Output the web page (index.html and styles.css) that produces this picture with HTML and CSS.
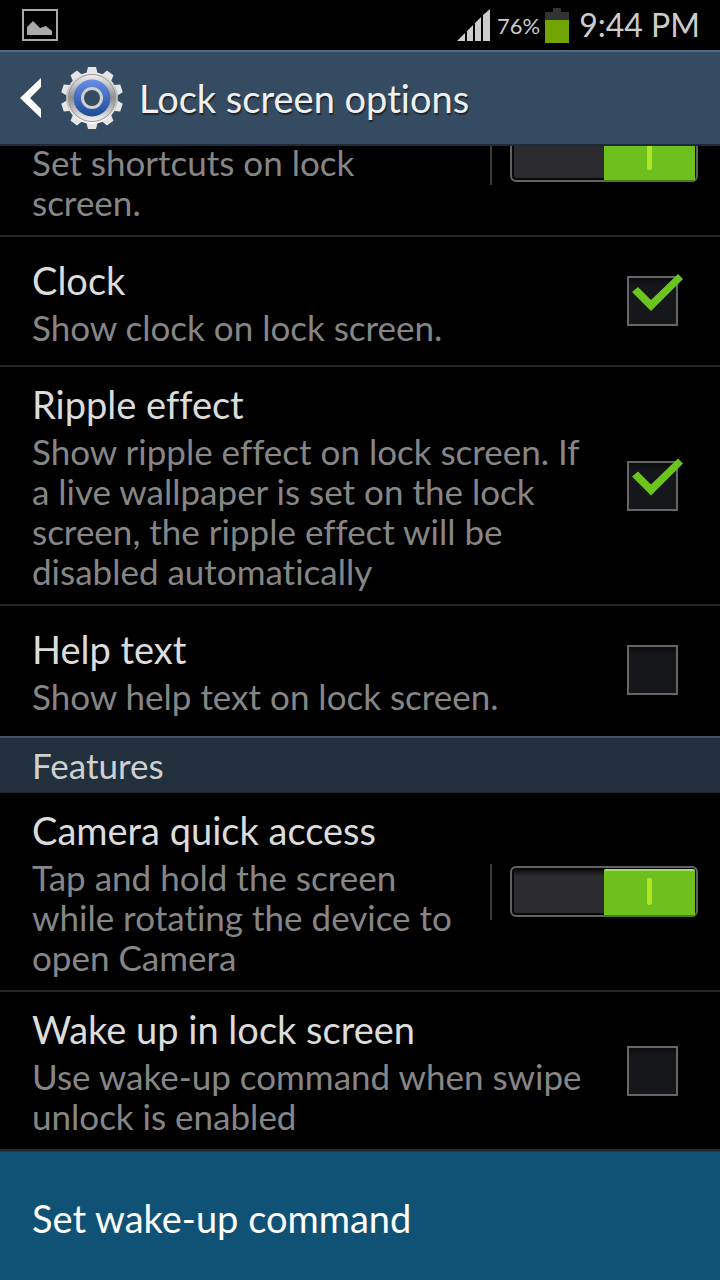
FILE: index.html
```html
<!DOCTYPE html>
<html lang="en">
<head>
    <meta charset="UTF-8">
    <meta name="viewport" content="width=device-width, initial-scale=1.0">
    <title>Lock screen options</title>
    <link rel="stylesheet" href="styles.css">
</head>
<body>
    <div class="status">
        <svg class="picture" width="36" height="32" viewBox="0 0 36 32">
            <rect x="1" y="1" width="34" height="30" fill="none" stroke="#aaa" stroke-width="2"/>
            <path d="M5 26V18L11 12L18 19L24 17L30 22V26Z" fill="#aaa"/>
        </svg>
        <svg class="signal" width="34" height="32" viewBox="0 0 34 32">
            <path d="M0 32L8 24V32ZM10 22L16 16V32H10ZM18 14L24 8V32H18ZM26 6L33 0V32H26Z" fill="#ccc"/>
        </svg>
        <span class="percent">76%</span>
        <svg class="battery" width="24" height="35" viewBox="0 0 24 35">
            <path d="M8 0H16V4H24V12H0V4H8Z" fill="#333"/>
            <path d="M0 12H24V35H0Z" fill="#73a500"/>
        </svg>
        <span class="time">9:44 PM</span>
    </div>
    <header class="header">
        <button class="back" aria-label="Back">
            <svg width="22" height="40" viewBox="0 0 22 40">
                <path d="M21 0V9L10 20L21 31V40L0 20Z" fill="#fff"/>
            </svg>
        </button>
        <svg class="gear" width="62" height="64" viewBox="-31 -32 62 64">
            <defs>
                <linearGradient id="metal" x1="0" y1="0" x2="0" y2="1">
                    <stop offset="0" stop-color="#e8e8e8"/>
                    <stop offset=".5" stop-color="#b4b4b4"/>
                    <stop offset="1" stop-color="#fafafa"/>
                </linearGradient>
                <linearGradient id="ring" x1="0" y1="0" x2="0" y2="1">
                    <stop offset="0" stop-color="#f2f2f2"/>
                    <stop offset=".5" stop-color="#8e8e8e"/>
                    <stop offset="1" stop-color="#f4f4f4"/>
                </linearGradient>
                <linearGradient id="blue" x1="0" y1="0" x2="0" y2="1">
                    <stop offset="0" stop-color="#6b8de8"/>
                    <stop offset="1" stop-color="#194a94"/>
                </linearGradient>
                <path id="tooth" d="M-6 -23L-4 -31H4L6 -23Z"/>
            </defs>
            <g fill="#e6e6e6">
                <use href="#tooth"/>
                <use href="#tooth" transform="rotate(36)"/>
                <use href="#tooth" transform="rotate(72)"/>
                <use href="#tooth" transform="rotate(108)"/>
                <use href="#tooth" transform="rotate(144)"/>
                <use href="#tooth" transform="rotate(180)"/>
                <use href="#tooth" transform="rotate(216)"/>
                <use href="#tooth" transform="rotate(252)"/>
                <use href="#tooth" transform="rotate(288)"/>
                <use href="#tooth" transform="rotate(324)"/>
            </g>
            <circle r="26" fill="url(#metal)"/>
            <circle r="23.500" fill="url(#ring)" stroke="#999" stroke-width="1"/>
            <circle r="18.500" fill="url(#blue)"/>
            <circle r="9.500" fill="#344b61" stroke="#d0d0d0" stroke-width="3"/>
        </svg>
        <h1>Lock screen options</h1>
    </header>
    <main class="list">
        <label class="row scrolled">
            <span class="text">
                <span class="desc">Set shortcuts on lock screen.</span>
            </span>
            <span class="divider"></span>
            <input class="switch" type="checkbox" role="switch" checked>
        </label>
        <label class="row">
            <span class="text">
                <span class="title">Clock</span>
                <span class="desc">Show clock on lock screen.</span>
            </span>
            <input class="check" type="checkbox" checked>
        </label>
        <label class="row">
            <span class="text">
                <span class="title">Ripple effect</span>
                <span class="desc">Show ripple effect on lock screen. If a live wallpaper is set on the lock screen, the ripple effect will be disabled automatically</span>
            </span>
            <input class="check" type="checkbox" checked>
        </label>
        <label class="row last">
            <span class="text">
                <span class="title">Help text</span>
                <span class="desc">Show help text on lock screen.</span>
            </span>
            <input class="check" type="checkbox">
        </label>
        <h2>Features</h2>
        <label class="row">
            <span class="text">
                <span class="title">Camera quick access</span>
                <span class="desc">Tap and hold the screen while rotating the device to open Camera</span>
            </span>
            <span class="divider"></span>
            <input class="switch" type="checkbox" role="switch" checked>
        </label>
        <label class="row">
            <span class="text">
                <span class="title">Wake up in lock screen</span>
                <span class="desc">Use wake-up command when swipe unlock is enabled</span>
            </span>
            <input class="check" type="checkbox">
        </label>
        <button class="command">Set wake-up command</button>
    </main>
</body>
</html>
```
FILE: styles.css
```css
*{
    box-sizing: border-box;
}
body{
    margin: 0;
    min-height: 100vh;
    background-color: #000;
    color: #dcdcdc;
    font-family: Lato, "Open Sans", sans-serif;
    font-size: 38px;
    font-variant-ligatures: none;
}
h1, h2{
    margin: 0;
    font-weight: 400;
}
button{
    border: 0;
    font-family: inherit;
    font-variant-ligatures: none;
    cursor: pointer;
}
.status{
    display: flex;
    align-items: center;
    height: 50px;
    padding: 0 20px 0 22px;
    color: #ccc;
}
.signal{
    margin-left: auto;
}
.percent{
    margin: 0 5px 0 6px;
    font-size: 22px;
}
.time{
    margin-left: 10px;
    font-size: 32px;
    line-height: 50px;
}
.header{
    display: flex;
    align-items: center;
    height: 96px;
    padding-left: 20px;
    background-color: #344b61;
    border-top: 2px solid #4c6b83;
    border-bottom: 2px solid #1b2b39;
}
.back{
    display: flex;
    padding: 0;
    background: none;
}
.gear{
    margin: 0 16px 0 19px;
}
.header h1{
    color: #f0f0f0;
    font-size: 38px;
    text-shadow: 1px 2px 1px #1b2631;
}
.list{
    overflow: hidden;
}
.row{
    display: flex;
    align-items: center;
    min-height: 130px;
    padding: 13px 22px 13px 32px;
    border-bottom: 2px solid #262626;
}
.row.last{
    border-bottom-color: #000;
}
/* first row is partly scrolled under the header */
.row.scrolled{
    min-height: 159px;
    margin-top: -68px;
}
.scrolled .text{
    align-self: flex-end;
}
.text{
    flex: 1;
}
.title{
    display: block;
    margin-bottom: 3px;
    line-height: 48px;
}
.desc{
    display: block;
    color: #868686;
    font-size: 35px;
    line-height: 40px;
}
.divider{
    width: 2px;
    height: 56px;
    margin: 0 18px 0 28px;
    background-color: #3c3c3c;
}
.check, .switch{
    appearance: none;
    flex: none;
    position: relative;
    margin: 0;
}
.check{
    width: 51px;
    height: 50px;
    margin: 0 20px 0 36px;
    background: linear-gradient(#0b0c0e, #16171b 8px);
    border: 2px solid #666;
}
.check:checked::after{
    content: '';
    position: absolute;
    top: -5px;
    left: 1px;
    width: 54px;
    height: 40px;
    background-color: #6cc41f;
    clip-path: polygon(2px 19px, 8px 14px, 21px 27px, 48px 1px, 53px 6px, 21px 38px);
}
.switch{
    width: 188px;
    height: 51px;
    background: linear-gradient(#08080a, #2b2b30 8px);
    border: 2px solid #626262;
    border-radius: 6px;
    box-shadow: inset 0 0 0 2px #08080a;
}
.switch:checked::before{
    content: '';
    position: absolute;
    top: 1px;
    right: 1px;
    width: 91px;
    height: 44px;
    background-color: #6dc01e;
    border-top: 2px solid #a0df62;
    border-bottom: 2px solid #448010;
    border-radius: 2px;
}
.switch:checked::after{
    content: '';
    position: absolute;
    top: 10px;
    right: 44px;
    width: 5px;
    height: 27px;
    background-color: #b0e521;
    border-radius: 2px;
}
h2{
    height: 57px;
    padding-left: 32px;
    background-color: #22303d;
    border-top: 2px solid #435361;
    border-bottom: 1px solid #18232c;
    color: #d0d0d0;
    font-size: 35px;
    line-height: 54px;
}
.command{
    display: block;
    width: 100%;
    min-height: 129px;
    padding: 4px 32px 0;
    background-color: #105276;
    border-top: 1px solid #1b394a;
    color: #fff;
    font-size: 38px;
    text-align: left;
}
```
